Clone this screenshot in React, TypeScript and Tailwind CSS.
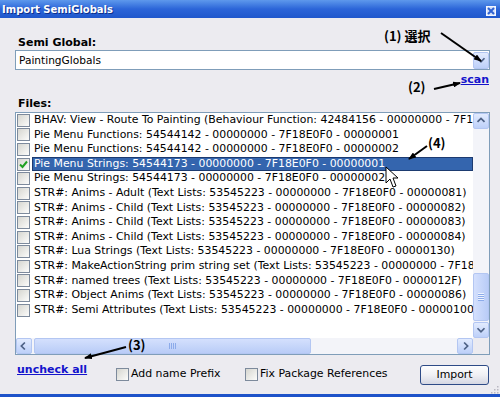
import React from 'react';

const ROWS = [
  { label: 'BHAV: View - Route To Painting (Behaviour Function: 42484156 - 00000000 - 7F18E0F0 - 00001001)', checked: false },
  { label: 'Pie Menu Functions: 54544142 - 00000000 - 7F18E0F0 - 00000001', checked: false },
  { label: 'Pie Menu Functions: 54544142 - 00000000 - 7F18E0F0 - 00000002', checked: false },
  { label: 'Pie Menu Strings: 54544173 - 00000000 - 7F18E0F0 - 00000001', checked: true, selected: true },
  { label: 'Pie Menu Strings: 54544173 - 00000000 - 7F18E0F0 - 00000002', checked: false },
  { label: 'STR#: Anims - Adult (Text Lists: 53545223 - 00000000 - 7F18E0F0 - 00000081)', checked: false },
  { label: 'STR#: Anims - Child (Text Lists: 53545223 - 00000000 - 7F18E0F0 - 00000082)', checked: false },
  { label: 'STR#: Anims - Child (Text Lists: 53545223 - 00000000 - 7F18E0F0 - 00000083)', checked: false },
  { label: 'STR#: Anims - Child (Text Lists: 53545223 - 00000000 - 7F18E0F0 - 00000084)', checked: false },
  { label: 'STR#: Lua Strings (Text Lists: 53545223 - 00000000 - 7F18E0F0 - 00000130)', checked: false },
  { label: 'STR#: MakeActionString prim string set (Text Lists: 53545223 - 00000000 - 7F18E0F0 - 00000085)', checked: false },
  { label: 'STR#: named trees (Text Lists: 53545223 - 00000000 - 7F18E0F0 - 0000012F)', checked: false },
  { label: 'STR#: Object Anims (Text Lists: 53545223 - 00000000 - 7F18E0F0 - 00000086)', checked: false },
  { label: 'STR#: Semi Attributes (Text Lists: 53545223 - 00000000 - 7F18E0F0 - 00000100)', checked: false },
];

function CheckBox({ checked = false }: { checked?: boolean }) {
  return (
    <span className="w-[13px] h-[13px] shrink-0 border border-[#7d8a9c] bg-linear-to-br from-[#d6d6d0] to-[#fcfcfb] flex items-center justify-center">
      {checked && (
        <svg width="9" height="9" viewBox="0 0 9 9">
          <path d="M1 4.5 L3.5 7 L8 1.5" fill="none" stroke="#21a121" strokeWidth="2" />
        </svg>
      )}
    </span>
  );
}

function ScrollBtn({ dir, className = '' }: { dir: 'up' | 'down' | 'left' | 'right'; className?: string }) {
  const pts = {
    up: '4,9 8,5 12,9',
    down: '4,6 8,10 12,6',
    left: '9,4 5,8 9,12',
    right: '7,4 11,8 7,12',
  }[dir];
  return (
    <div className={`w-[16px] h-[16px] shrink-0 rounded-[2px] border border-[#b3c6f2] bg-linear-to-b from-[#e2ebfe] to-[#bdd0f9] flex items-center justify-center ${className}`}>
      <svg width="16" height="16" viewBox="0 0 16 16">
        <polyline points={pts} fill="none" stroke="#4d6185" strokeWidth="2" />
      </svg>
    </div>
  );
}

export default function App() {
  return (
    <div className="relative w-[500px] h-[397px] overflow-hidden bg-[#ecebf0] flex flex-col font-['DejaVu_Sans',sans-serif] text-black">
      {/* title bar */}
      <div className="h-[18px] shrink-0 bg-linear-to-b from-[#5e98ec] via-[#2c65d8] to-[#1f57cc] flex items-start justify-between">
        <span className="pl-[2px] pt-[4px] leading-[12px] text-[10px] font-bold text-white [text-shadow:1px_1px_0_#0d2f8c]">Import SemiGlobals</span>
        <div className="mt-[6px] mr-[4px] w-[10px] h-[10px] bg-[#d7e2fa] border border-white/70 flex items-center justify-center">
          <svg width="8" height="8" viewBox="0 0 8 8">
            <path d="M1 1 L7 7 M7 1 L1 7" stroke="#2f62d2" strokeWidth="2" />
          </svg>
        </div>
      </div>

      <div className="flex-1 pl-[15px] w-[490px] flex flex-col">
        <div className="mt-[18px] ml-[3px] h-[13px] leading-[13px] text-[11px] font-bold">Semi Global:</div>

        {/* combo */}
        <div className="mt-[1px] h-[20px] border border-[#7f9db9] bg-white flex items-center justify-between">
          <span className="pl-[3px] text-[10.6px] leading-[18px]">PaintingGlobals</span>
          <ScrollBtn dir="down" className="h-[17px]" />
        </div>

        <div className="mt-[3px] h-[13px] flex justify-end pr-[1px]">
          <span className="text-[11px] leading-[13px] font-bold text-[#1414cc] underline">scan</span>
        </div>

        <div className="mt-[11px] ml-[3px] h-[13px] leading-[13px] text-[11px] font-bold">Files:</div>

        {/* list box */}
        <div className="mt-[2px] h-[243px] border border-[#7f9db9] bg-white flex flex-col">
          <div className="h-[225px] flex">
            <div className="flex-1 min-w-0 overflow-hidden">
              {ROWS.map((r, i) => (
                <div key={i} className="h-[14.6px] flex items-center">
                  <span className="ml-[1px]"><CheckBox checked={r.checked} /></span>
                  <span
                    className={`ml-[2px] pl-[2px] flex-1 whitespace-nowrap overflow-hidden text-[10.9px] leading-[14.6px] h-[14.6px] ${r.selected ? 'bg-[#3465ae] text-white outline outline-1 -outline-offset-1 outline-[#1d3b70]' : ''}`}
                  >
                    {r.label}
                  </span>
                </div>
              ))}
            </div>
            {/* vertical scrollbar */}
            <div className="w-[16px] shrink-0 bg-[#f3f4f9] flex flex-col">
              <ScrollBtn dir="up" />
              <div className="flex-1" />
              <div className="h-[48px] rounded-[2px] border border-[#b3c6f2] bg-linear-to-r from-[#d4e0fd] to-[#b9ccf7] flex flex-col items-center justify-center gap-[1px]">
                {[0, 1, 2, 3].map(k => (
                  <span key={k} className="w-[6px] h-[1px] bg-[#8cabea] shadow-[0_-1px_0_#eef3fe]" />
                ))}
              </div>
              <div className="h-[1px]" />
              <ScrollBtn dir="down" />
            </div>
          </div>
          {/* horizontal scrollbar */}
          <div className="h-[16px] flex">
            <div className="flex-1 bg-[#f3f4f9] flex items-center">
              <ScrollBtn dir="left" />
              <div className="ml-[2px] w-[277px] h-[16px] rounded-[2px] border border-[#b3c6f2] bg-linear-to-b from-[#d4e0fd] to-[#b9ccf7] flex items-center justify-center gap-[1px]">
                {[0, 1, 2, 3].map(k => (
                  <span key={k} className="w-[1px] h-[6px] bg-[#8cabea]" />
                ))}
              </div>
              <div className="flex-1" />
              <ScrollBtn dir="right" />
            </div>
            <div className="w-[16px] bg-[#ecebf0]" />
          </div>
        </div>

        {/* bottom row */}
        <div className="mt-[1px] h-[29px] flex items-end">
          <div className="w-[100px] self-start pl-[2px]">
            <span className="text-[11px] leading-[13px] font-bold text-[#1414cc] underline">uncheck all</span>
          </div>
          <div className="w-[129px] h-[14px] mb-[4px] ml-[1px] flex items-center gap-[2px]">
            <CheckBox />
            <span className="text-[10.9px] leading-[14px] whitespace-nowrap">Add name Prefix</span>
          </div>
          <div className="h-[14px] mb-[4px] flex items-center gap-[2px]">
            <CheckBox />
            <span className="text-[10.9px] leading-[14px] whitespace-nowrap">Fix Package References</span>
          </div>
          <button className="ml-auto mr-[1px] w-[69px] h-[20px] rounded-[3px] border border-[#2e4b87] bg-linear-to-b from-[#fdfdfe] via-[#f0f0f4] to-[#d5d7e3] text-[10.9px] leading-[18px] text-center">
            Import
          </button>
        </div>
      </div>

      <div className="h-[3px] shrink-0 bg-[#1d52c9]" />

      {/* resize grip */}
      <svg className="absolute left-[489px] top-[384px]" width="10" height="10" viewBox="0 0 10 10">
        {[[8, 2], [5, 5], [8, 5], [2, 8], [5, 8], [8, 8]].map(([x, y], i) => (
          <rect key={i} x={x} y={y} width="1.5" height="1.5" fill="#b9b8c2" />
        ))}
      </svg>

      {/* annotations */}
      <span className="absolute left-[384px] top-[27px] text-[13px] leading-[18px] font-bold font-['Noto_Sans_CJK_JP',sans-serif] whitespace-nowrap">(1) 選択</span>
      <span className="absolute left-[408px] top-[78px] text-[13px] leading-[18px] font-bold font-['Noto_Sans_CJK_JP',sans-serif]">(2)</span>
      <span className="absolute left-[428px] top-[134px] text-[13px] leading-[18px] font-bold font-['Noto_Sans_CJK_JP',sans-serif]">(4)</span>
      <span className="absolute left-[128px] top-[336px] text-[13px] leading-[18px] font-bold font-['Noto_Sans_CJK_JP',sans-serif]">(3)</span>

      <svg className="absolute inset-0 pointer-events-none" width="500" height="397" viewBox="0 0 500 397">
        <defs>
          <marker id="ah" markerWidth="8" markerHeight="6" refX="7" refY="3" orient="auto" markerUnits="userSpaceOnUse">
            <path d="M0 0 L8 3 L0 6 Z" fill="#000" />
          </marker>
        </defs>
        <line x1="441" y1="33" x2="481" y2="61" stroke="#000" strokeWidth="2" markerEnd="url(#ah)" />
        <line x1="434" y1="89" x2="460" y2="83" stroke="#000" strokeWidth="2" markerEnd="url(#ah)" />
        <line x1="126" y1="347" x2="85" y2="358" stroke="#000" strokeWidth="2" markerEnd="url(#ah)" />
        <line x1="427" y1="146" x2="409" y2="159" stroke="#000" strokeWidth="2" markerEnd="url(#ah)" />
        {/* mouse cursor */}
        <path d="M386 167 L386 183 L390 179 L393 187 L396 186 L393 178 L398 178 Z" fill="#fff" stroke="#000" strokeWidth="1" />
      </svg>
    </div>
  );
}
